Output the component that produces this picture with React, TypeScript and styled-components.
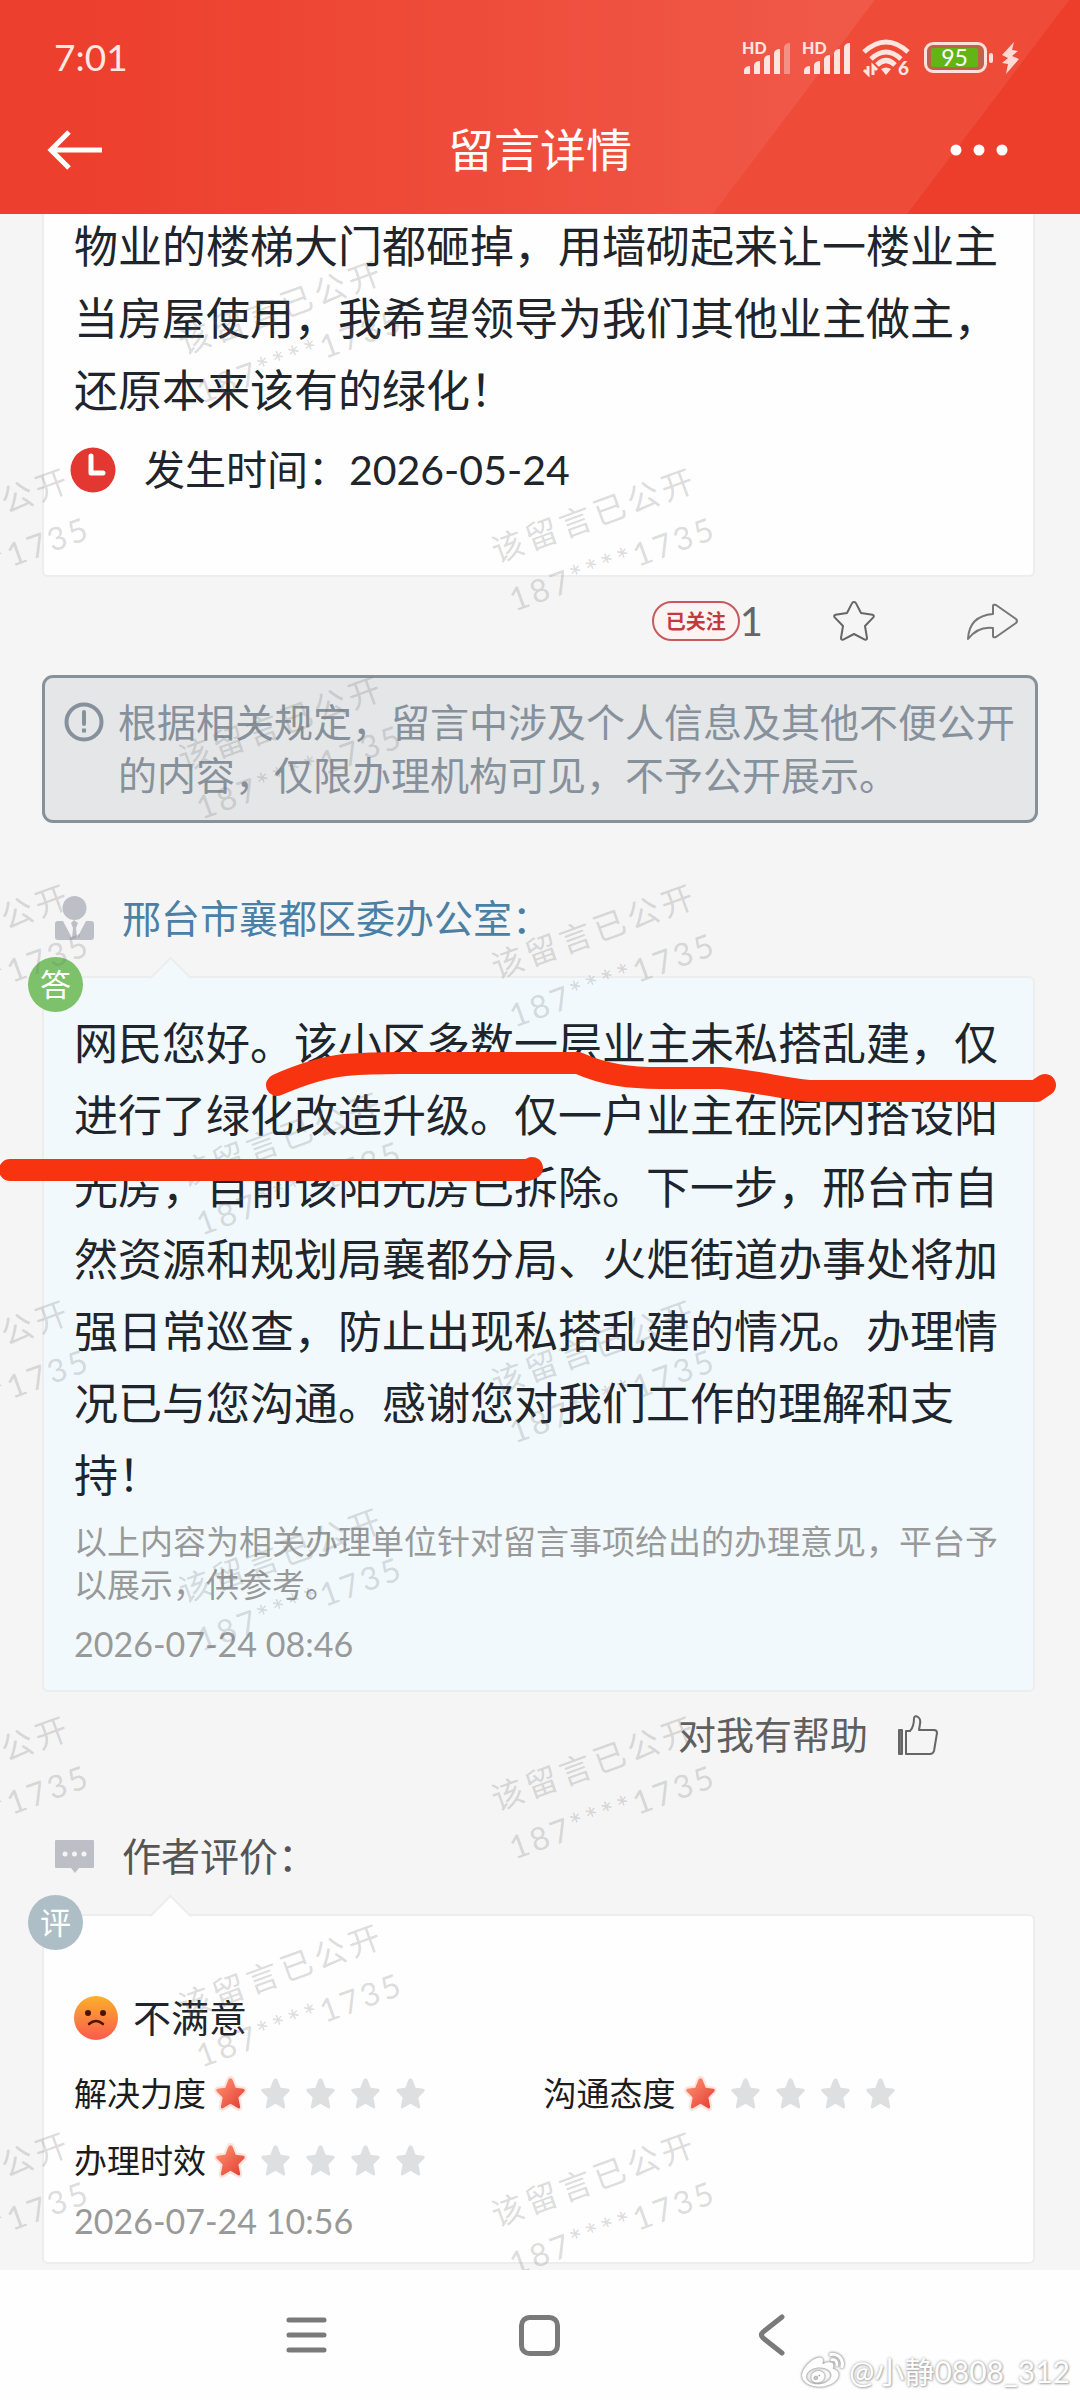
import React from 'react';
import styled, { createGlobalStyle, css } from 'styled-components';
import { FaWeibo } from 'react-icons/fa';

const GlobalStyle = createGlobalStyle`
  * { box-sizing: border-box; }
  body {
    margin: 0;
    background: #f5f5f5;
    color: #20242b;
    font-family: Lato, "Noto Sans CJK SC", sans-serif;
    line-height: 1.2;
    text-spacing-trim: space-all;
  }
  p, h1, h2 { margin: 0; font-weight: 400; }
  button {
    margin: 0;
    padding: 0;
    border: 0;
    background: none;
    color: inherit;
    font: inherit;
    cursor: pointer;
  }
  svg { display: block; flex: none; overflow: visible; }
`;

const Screen = styled.div`
  position: relative;
  display: flex;
  flex-direction: column;
  min-height: 100vh;
  overflow: hidden;
`;

/* ---------- header ---------- */

const Header = styled.header`
  position: relative;
  z-index: 2;
  padding-bottom: 29px;
  color: #fff;
  background: linear-gradient(90deg, #ed3f2d 8%, #f05847 76%);

  &::before,
  &::after {
    content: '';
    position: absolute;
    inset: 0;
    z-index: -1;
  }
  &::before {
    background: #ee4b39;
    clip-path: polygon(81% 0, 100% 0, 100% 100%, 66% 100%);
  }
  &::after {
    background: #ed3e2c;
    clip-path: polygon(99% 0, 100% 0, 100% 100%, 84% 100%);
  }
`;

const StatusBar = styled.div`
  display: flex;
  align-items: center;
  justify-content: space-between;
  height: 115px;
  padding: 0 61px 0 54px;
  color: #ffe7e3;
`;

const Clock = styled.span`
  font-size: 37px;
`;

const StatusIcons = styled.div`
  display: flex;
  align-items: center;
  gap: 10px;
`;

const Battery = styled.div`
  display: flex;
  align-items: center;
  gap: 2px;
  margin-left: 4px;

  &::after {
    content: '';
    width: 4px;
    height: 10px;
    border-radius: 2px;
    background: #ffe0dc;
  }
`;

const BatteryCase = styled.div`
  display: flex;
  width: 63px;
  height: 31px;
  padding: 3px 6px 3px 4px;
  border: 3px solid #ffe0dc;
  border-radius: 9px;
  background: #c0624a;
`;

const BatteryLevel = styled.span`
  flex: 1;
  border-radius: 2px;
  background: #63b515;
  color: #fff;
  font-size: 23px;
  line-height: 19px;
  text-align: center;
`;

const Bolt = styled.svg`
  margin-left: -2px;
`;

const AppBar = styled.div`
  display: grid;
  grid-template-columns: 1fr auto 1fr;
  align-items: center;
  height: 70px;
  padding: 0 48px;
`;

const Title = styled.h1`
  font-size: 46px;
  line-height: 70px;
`;

const BarButton = styled.button<{ $end?: boolean }>`
  justify-self: ${p => (p.$end ? 'end' : 'start')};
  padding: ${p => (p.$end ? '12px 24px 12px 0' : '12px 0')};
`;

/* ---------- page body ---------- */

const Main = styled.main`
  position: relative;
  flex: 1;
  overflow: hidden;
  padding-bottom: 6px;
  background: #f5f5f5;
`;

const Card = styled.section<{ $tone?: 'blue' | 'white'; $scrolled?: boolean }>`
  --tone: ${p => (p.$tone === 'blue' ? '#f1f9fd' : '#fefefe')};
  position: relative;
  margin: 0 45px 0 42px;
  padding: 0 30px;
  border: 2px solid #ededee;
  border-radius: 6px;
  background: var(--tone);

  ${p =>
    p.$scrolled
      ? css`
          margin-top: -4px;
          padding-bottom: 76px;
          border-top: 0;
        `
      : css`
          &::before {
            content: '';
            position: absolute;
            top: -15px;
            left: 111px;
            width: 27px;
            height: 27px;
            border: 2px solid #ededee;
            border-right-color: transparent;
            border-bottom-color: transparent;
            background: var(--tone);
            background-clip: padding-box;
            transform: rotate(45deg);
          }
        `}
`;

const ReplyCard = styled(Card)`
  padding-top: 29px;
  padding-bottom: 26px;
`;

const ReviewCard = styled(Card)`
  padding-top: 72px;
  padding-bottom: 21px;
`;

const Body = styled.p`
  position: relative;
  font-size: 44px;
  line-height: 72px;
`;

const TimeRow = styled.div`
  display: flex;
  align-items: center;
  gap: 28px;
  height: 58px;
  margin-top: 15px;
  font-size: 41px;

  svg { margin-left: -4px; }
`;

const Actions = styled.div`
  display: flex;
  align-items: center;
  justify-content: flex-end;
  gap: 70px;
  height: 88px;
  margin-bottom: 10px;
  padding-right: 62px;
  color: #666;
`;

const Follow = styled.div`
  display: flex;
  align-items: center;
  font-size: 40px;
  line-height: 40px;
`;

const FollowButton = styled.button`
  width: 88px;
  height: 40px;
  border: 2px solid #c65a5e;
  border-radius: 20px;
  background: #fcf3f3;
  color: #c23a40;
  font-size: 20px;
  font-weight: 700;
  line-height: 36px;
`;

const ShareButton = styled.button`
  margin-left: 22px;
`;

const Notice = styled.aside`
  display: flex;
  align-items: flex-start;
  gap: 14px;
  margin: 0 42px;
  padding: 18px 16px 18px 19px;
  border: 3px solid #87919a;
  border-radius: 11px;
  background: #e4e6e8;
  color: #87919b;
  font-size: 39px;
  line-height: 53px;

  svg { margin: 6px 0; }
`;

const SectionTitle = styled.h2<{ $link?: boolean; $space: number }>`
  display: flex;
  align-items: center;
  gap: 28px;
  height: 60px;
  margin: ${p => p.$space}px 0 28px;
  padding-left: 55px;
  color: ${p => (p.$link ? '#4b80a6' : '#555')};
  font-size: 39px;
`;

const Badge = styled.span<{ $color: string }>`
  position: absolute;
  top: -21px;
  left: -16px;
  width: 55px;
  height: 55px;
  border-radius: 50%;
  background: ${p => p.$color};
  color: #fff;
  font-size: 31px;
  line-height: 55px;
  text-align: center;
`;

const Disclaimer = styled.p`
  margin-top: 9px;
  color: #999;
  font-size: 33px;
  line-height: 43px;
`;

const Stamp = styled.time<{ $space: number }>`
  display: block;
  margin-top: ${p => p.$space}px;
  color: #999;
  font-size: 34px;
  line-height: 40px;
`;

const Helpful = styled.div`
  display: flex;
  justify-content: flex-end;
  height: 86px;
  padding-right: 142px;
  color: #5f5f5f;
  font-size: 38px;
`;

const HelpfulButton = styled.button`
  display: flex;
  align-items: center;
  gap: 29px;
`;

const Mood = styled.div`
  display: flex;
  align-items: center;
  gap: 15px;
  height: 60px;
  font-size: 38px;
`;

const Ratings = styled.div`
  display: grid;
  grid-template-columns: 1fr 1fr;
  grid-auto-rows: 67px;
  column-gap: 10px;
  margin-top: 12px;
  color: #1c1c1c;
  font-size: 33px;
`;

const RatingRow = styled.div`
  display: flex;
  align-items: center;
  gap: 9px;
`;

const Stars = styled.span`
  display: flex;
  gap: 14px;
`;

/* ---------- overlays ---------- */

const WatermarkLayer = styled.div`
  position: absolute;
  top: 13px;
  left: -179px;
  display: grid;
  grid-template-columns: repeat(3, 313px);
  grid-auto-rows: 208px;
  place-items: center;
  pointer-events: none;
`;

const Watermark = styled.div<{ $col: number; $row: number }>`
  grid-column: ${p => p.$col};
  grid-row: ${p => p.$row};
  display: grid;
  transform: rotate(-20deg);
  color: rgba(110, 110, 110, 0.24);
  font-size: 32px;
  line-height: 52px;
  white-space: nowrap;
`;

const WatermarkLine = styled.span<{ $gap: number }>`
  letter-spacing: ${p => p.$gap}px;
`;

const Marker = styled.svg`
  position: absolute;
  top: 0;
  left: 0;
  z-index: 1;
  pointer-events: none;
`;

const SystemNav = styled.nav`
  position: relative;
  display: flex;
  justify-content: center;
  gap: 192px;
  height: 130px;
  padding-right: 2px;
  background: #fefefe;
`;

const NavButton = styled.button`
  display: flex;
  align-items: center;
  justify-content: center;
  width: 41px;
`;

const Credit = styled.span`
  position: absolute;
  right: 10px;
  bottom: 7px;
  display: flex;
  align-items: center;
  gap: 5px;
  color: #fff;
  font-size: 30px;
  line-height: 44px;
  text-shadow: 0 0 3px #999, 1px 1px 2px #bbb;

  svg { filter: drop-shadow(0 0 1px #999) drop-shadow(0 0 1px #aaa); }
`;

/* ---------- drawings ---------- */

const Signal = ({ level }: { level: number }) => (
  <svg width="50" height="34" viewBox="0 0 50 34" fill="#ffe4e0" aria-hidden="true">
    <text x="0" y="13" fontSize="16" fontWeight="900">HD</text>
    {[8, 13, 19, 25, 31].map((h, i) => (
      <path
        key={h}
        opacity={i < level ? 1 : 0.4}
        d={`M${2 + i * 10} 33v${-h + 4}q1-4 6-4v${h}z`}
      />
    ))}
  </svg>
);

const Wifi = () => (
  <svg width="48" height="37" viewBox="0 0 48 37" fill="none" stroke="#ffe4e0" aria-hidden="true">
    <g strokeWidth="5">
      <path d="M2 13Q24-7 46 13" />
      <path d="M9 20Q24 6 39 20" />
      <path d="M15 26Q24 17 33 26" />
    </g>
    <path d="M19 30q5-3 10 0l-5 6z" fill="#ffe4e0" stroke="none" />
    <path d="M6 27v8l-4-4M11 36v-9l4 4" strokeWidth="3" />
    <text x="36" y="36" fontSize="19" fontWeight="900" fill="#ffe4e0" stroke="none">6</text>
  </svg>
);

const starPath =
  'M15 1q1.400 0 2 1.400l3 6.800 7.500.8q2 .5.800 2.200l-5.700 5.200 1.700 7.600q.2 2.400-1.900 1.600L15 22.800l-7.400 3.800q-2.100.8-1.900-1.600l1.700-7.600-5.700-5.200Q.5 10.500 2.500 10l7.500-.8 3-6.800Q13.600 1 15 1z';

const Rating = ({ label, value }: { label: string; value: number }) => (
  <RatingRow>
    <span>{label}</span>
    <Stars role="img" aria-label={`${value} / 5`}>
      {[1, 2, 3, 4, 5].map(n => (
        <svg key={n} width="31" height="33" viewBox="0 0 30 28" preserveAspectRatio="none">
          {n <= value && <path d={starPath} fill="#fff" stroke="#ffd9cf" strokeWidth="4" opacity="0.7" />}
          <path d={starPath} fill={n <= value ? 'url(#hot)' : '#dddfe1'} />
        </svg>
      ))}
    </Stars>
  </RatingRow>
);

const marks = Array.from({ length: 10 }, (_, row) =>
  row % 2 === 0 ? [{ row: row + 1, col: 2 }] : [{ row: row + 1, col: 1 }, { row: row + 1, col: 3 }],
).flat();

export default function App() {
  return (
    <Screen lang="zh-CN">
      <GlobalStyle />
      <Header>
        <StatusBar>
          <Clock>7:01</Clock>
          <StatusIcons>
            <Signal level={4} />
            <Signal level={5} />
            <Wifi />
            <Battery>
              <BatteryCase>
                <BatteryLevel>95</BatteryLevel>
              </BatteryCase>
            </Battery>
            <Bolt width="18" height="32" viewBox="0 0 18 32" fill="#ffd9d4" aria-hidden="true">
              <path d="M13 0 1 13l6 3-6 5 6 1-2 10L18 17l-7-3 6-5-6-1z" />
            </Bolt>
          </StatusIcons>
        </StatusBar>
        <AppBar>
          <BarButton aria-label="返回">
            <svg width="55" height="40" viewBox="0 0 55 40" fill="none" stroke="#fff" strokeWidth="5">
              <path d="M21 2 3 20l18 18M3 20h51" />
            </svg>
          </BarButton>
          <Title>留言详情</Title>
          <BarButton $end aria-label="更多">
            <svg width="58" height="12" viewBox="0 0 58 12" fill="#fff">
              <circle cx="6" cy="6" r="5.500" />
              <circle cx="29" cy="6" r="5.500" />
              <circle cx="52" cy="6" r="5.500" />
            </svg>
          </BarButton>
        </AppBar>
      </Header>

      <Main>
        <Card $scrolled>
          <Body>
            物业的楼梯大门都砸掉，用墙砌起来让一楼业主当房屋使用，我希望领导为我们其他业主做主，还原本来该有的绿化！
          </Body>
          <TimeRow>
            <svg width="46" height="46" viewBox="0 0 46 46" aria-hidden="true">
              <circle cx="23" cy="23" r="22.500" fill="#e33732" />
              <path d="M21 9v17h12" fill="none" stroke="#fff" strokeWidth="5" strokeLinecap="round" strokeLinejoin="round" />
            </svg>
            <span>发生时间：2026-05-24</span>
          </TimeRow>
        </Card>

        <Actions>
          <Follow>
            <FollowButton>已关注</FollowButton>
            <span>1</span>
          </Follow>
          <button aria-label="收藏">
            <svg width="42" height="40" viewBox="0 0 42 40" fill="none" stroke="#666" strokeWidth="2" strokeLinejoin="round">
              <path d="M21 1q1.500 0 2.200 1.600L28 12l11.500 1.700q2.200.8.800 2.700L32 25l2 12q0 2.300-2.200 1.600L21 33l-10.800 5.600Q8 39.300 8 37l2-12-8.300-8.600q-1.400-1.900.8-2.700L14 12l4.800-9.400Q19.500 1 21 1z" />
            </svg>
          </button>
          <ShareButton aria-label="分享">
            <svg width="51" height="37" viewBox="0 0 51 37" fill="none" stroke="#777" strokeWidth="2" strokeLinejoin="round">
              <path d="M26 11V3q0-2 3-1l20 14q2 2 0 4L29 34q-3 1-3-1v-8Q11 23 1 36 2 13 26 11z" />
            </svg>
          </ShareButton>
        </Actions>

        <Notice>
          <svg width="40" height="40" viewBox="0 0 40 40" fill="none" stroke="#87919b" strokeWidth="4" aria-hidden="true">
            <circle cx="20" cy="20" r="17.500" />
            <path d="M20 10v12" strokeLinecap="round" />
            <path d="M20 26.500v4" />
          </svg>
          <p>根据相关规定，留言中涉及个人信息及其他不便公开的内容，仅限办理机构可见，不予公开展示。</p>
        </Notice>

        <SectionTitle $link $space={65}>
          <svg width="39" height="44" viewBox="0 0 39 44" fill="#bcc0c6" aria-hidden="true">
            <circle cx="19.500" cy="12" r="12" />
            <path d="M3 25h5l9 17 1-10-2-5 3-3 4 3-2 5 1 10 9-17h5q3 0 3 3v13q0 3-3 3H3q-3 0-3-3V28q0-3 3-3z" />
          </svg>
          邢台市襄都区委办公室：
        </SectionTitle>

        <ReplyCard $tone="blue">
          <Badge $color="#7dc16b">答</Badge>
          <Body>
            网民您好。该小区多数一层业主未私搭乱建，仅进行了绿化改造升级。仅一户业主在院内搭设阳光房，目前该阳光房已拆除。下一步，邢台市自然资源和规划局襄都分局、火炬街道办事处将加强日常巡查，防止出现私搭乱建的情况。办理情况已与您沟通。感谢您对我们工作的理解和支持！
          </Body>
          <Disclaimer>以上内容为相关办理单位针对留言事项给出的办理意见，平台予以展示，供参考。</Disclaimer>
          <Stamp $space={18}>2026-07-24 08:46</Stamp>
        </ReplyCard>

        <Helpful>
          <HelpfulButton>
            对我有帮助
            <svg width="41" height="41" viewBox="0 0 41 41" fill="none" stroke="#666" strokeWidth="2" strokeLinejoin="round" aria-hidden="true">
              <path d="M2 15h3v24H2z" fill="#777" />
              <path d="M9 16h4q4-4 4-13 1-3 4-1 3 2 2 7l-1 6h15q3 0 3 3l-3 18q-1 3-4 3H9z" />
            </svg>
          </HelpfulButton>
        </Helpful>

        <SectionTitle $space={48}>
          <svg width="39" height="33" viewBox="0 0 39 33" aria-hidden="true">
            <path d="M1 0h37q1 0 1 1v26q0 1-1 1H24l-4 5-4-5H1q-1 0-1-1V1q0-1 1-1z" fill="#bcc0c6" />
            <g fill="#f5f5f5">
              <circle cx="10" cy="14" r="2.500" />
              <circle cx="19.500" cy="14" r="2.500" />
              <circle cx="29" cy="14" r="2.500" />
            </g>
          </svg>
          作者评价：
        </SectionTitle>

        <ReviewCard>
          <Badge $color="#aebec6">评</Badge>
          <Mood>
            <svg width="44" height="44" viewBox="0 0 44 44" aria-hidden="true">
              <defs>
                <linearGradient id="face" x1="0" y1="0" x2="0" y2="1">
                  <stop offset="0" stopColor="#fbb02c" />
                  <stop offset="1" stopColor="#fb5a4e" />
                </linearGradient>
                <linearGradient id="hot" x1="0" y1="0" x2="1" y2="1">
                  <stop offset="0.200" stopColor="#fb8364" />
                  <stop offset="0.850" stopColor="#e5483c" />
                </linearGradient>
              </defs>
              <circle cx="22" cy="22" r="22" fill="url(#face)" />
              <circle cx="14" cy="17" r="3" fill="#4a1405" />
              <circle cx="29" cy="17" r="3" fill="#4a1405" />
              <path d="M15 28q7-6 14 0" fill="none" stroke="#4a1405" strokeWidth="2.500" strokeLinecap="round" />
            </svg>
            不满意
          </Mood>
          <Ratings>
            <Rating label="解决力度" value={1} />
            <Rating label="沟通态度" value={1} />
            <Rating label="办理时效" value={1} />
          </Ratings>
          <Stamp $space={7}>2026-07-24 10:56</Stamp>
        </ReviewCard>

        <WatermarkLayer aria-hidden="true">
          {marks.map(m => (
            <Watermark key={`${m.row}-${m.col}`} $col={m.col} $row={m.row}>
              <WatermarkLine $gap={4}>该留言已公开</WatermarkLine>
              <WatermarkLine $gap={3}>187****1735</WatermarkLine>
            </Watermark>
          ))}
        </WatermarkLayer>
      </Main>

      <Marker width="1080" height="1240" viewBox="0 0 1080 1240" fill="none" stroke="#f7340f" strokeWidth="22" strokeLinecap="round" strokeLinejoin="round" aria-hidden="true">
        <path d="M277 1085C300 1075 325 1067 345 1065Q370 1063 399 1063H578C605 1075 630 1078 660 1078H720C750 1080 780 1088 809 1091H1036L1045 1085" />
        <path d="M10 1170H528L532 1168" />
      </Marker>

      <SystemNav>
        <NavButton aria-label="菜单">
          <svg width="39" height="34" viewBox="0 0 39 34" stroke="#7a7a7a" strokeWidth="5" strokeLinecap="round">
            <path d="M2 2h35M2 17h35M2 32h35" />
          </svg>
        </NavButton>
        <NavButton aria-label="主屏幕">
          <svg width="41" height="41" viewBox="0 0 41 41" fill="none" stroke="#7a7a7a" strokeWidth="5">
            <rect x="2.500" y="2.500" width="36" height="36" rx="8" />
          </svg>
        </NavButton>
        <NavButton aria-label="后退">
          <svg width="26" height="42" viewBox="0 0 26 42" fill="none" stroke="#7a7a7a" strokeWidth="5" strokeLinecap="round">
            <path d="M23 3 4 18q-3 3 0 6l19 15" />
          </svg>
        </NavButton>
        <Credit>
          <FaWeibo size={42} aria-hidden="true" />
          @小静0808_312
        </Credit>
      </SystemNav>
    </Screen>
  );
}
